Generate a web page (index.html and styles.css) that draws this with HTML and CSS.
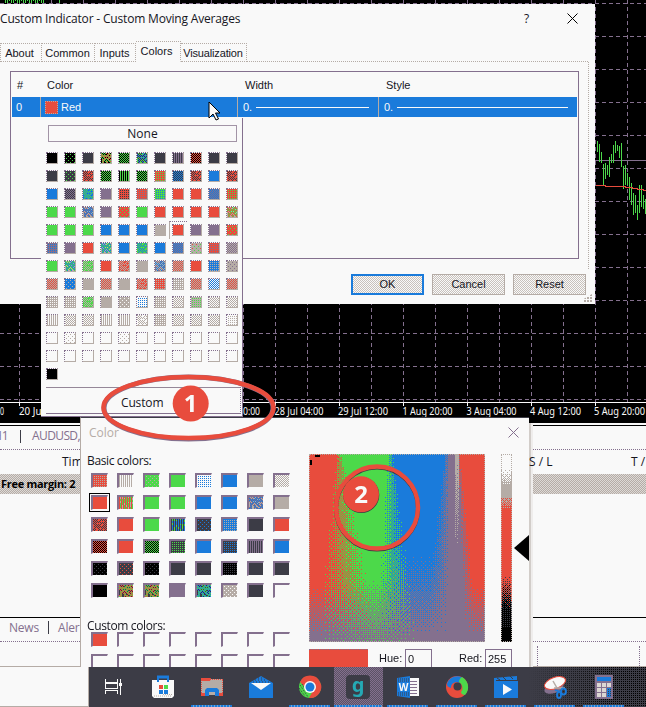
FILE: index.html
```html
<!DOCTYPE html>
<html lang="en">
<head>
<meta charset="utf-8">
<title>Custom Indicator - Custom Moving Averages</title>
<link rel="stylesheet" href="styles.css">
</head>
<body>
<main class="desktop">
  <svg class="chart" id="chart" width="646" height="425" viewBox="0 0 646 425" shape-rendering="crispEdges"></svg>

  <section class="terminal">
    <div class="symbol-tabs"><span class="tab-h1">H1</span><i></i><span class="tab-symbol">AUDUSD,</span></div>
    <div class="trade-head"><span>Tim</span><span>S / L</span><span>T /</span></div>
    <div class="margin-row">Free margin: 2</div>
    <div class="trade-space"></div>
    <div class="news-tabs"><span>News</span><i></i><span>Aler</span></div>
    <div class="status"><i></i></div>
  </section>

  <section class="dialog">
    <header class="title-bar"><h1>Custom Indicator - Custom Moving Averages</h1><span class="help">?</span>
      <svg width="11" height="11" viewBox="0 0 11 11"><path d="M.5.5l10 10M10.5.5l-10 10" stroke="#000" fill="none"/></svg></header>
    <nav class="tabs"><span class="about">About</span><span class="common">Common</span><span class="inputs">Inputs</span><span class="colors active">Colors</span><span class="visual">Visualization</span><b></b></nav>
    <div class="tab-page">
      <div class="table">
        <div class="row head"><span>#</span><span>Color</span><span>Width</span><span>Style</span></div>
        <div class="row selected"><span>0</span><span><i class="chip"></i>Red</span><span>0.<hr></span><span>0.<hr></span></div>
      </div>
    </div>
    <footer class="actions"><button class="primary">OK</button><button>Cancel</button><button>Reset</button></footer>
    <i class="grip"></i>
  </section>

  <section class="picker">
    <header><span>Color</span><svg width="11" height="11" viewBox="0 0 11 11"><path d="M.5.5l10 10M10.5.5l-10 10" stroke="#84708e" fill="none"/></svg></header>
    <div class="picker-body">
      <div class="left">
        <h2>Basic colors:</h2>
        <div class="wells" id="basic"></div>
        <h2 class="second">Custom colors:</h2>
        <div class="wells" id="custom"></div>
      </div>
      <div class="right">
        <div class="mixers">
          <canvas id="spectrum" width="176" height="188"></canvas>
          <canvas id="lum" width="11" height="188"></canvas>
          <i class="arrow"></i>
        </div>
        <div class="values"><i class="preview"></i><label>Hue:</label><b>0</b><label class="red">Red:</label><b>255</b></div>
      </div>
    </div>
  </section>
  <i class="picker-shadow"></i>

  <section class="popup">
    <div class="none">None</div>
    <div class="swatches" id="swatches"></div>
    <div class="custom-button">Custom</div>
  </section>

  <svg class="cursor" width="14" height="21" viewBox="0 0 14 21"><path d="M1 1v16l4-4 3 6 2.500-1-3-6H12z" fill="#f9f9f9" stroke="#000"/></svg>

  <svg class="marks" width="646" height="707" viewBox="0 0 646 707">
    <ellipse cx="188.500" cy="408" rx="84.500" ry="31" fill="none" stroke="#84708e" stroke-width="5"/>
    <ellipse cx="188.500" cy="407.500" rx="85" ry="30.500" fill="none" stroke="#e84c3d" stroke-width="4.500"/>
    <circle cx="190.700" cy="403.500" r="18" fill="#e84c3d"/>
    <text x="190.500" y="412" font-size="24">1</text>
    <circle cx="377" cy="508.500" r="41" fill="none" stroke="#3c3c46" stroke-width="4"/>
    <circle cx="377" cy="507.500" r="41" fill="none" stroke="#e84c3d" stroke-width="4.500"/>
    <circle cx="361.300" cy="495" r="18" fill="#3c3c46"/>
    <circle cx="361" cy="494.300" r="18" fill="#e84c3d"/>
    <text x="361" y="503" font-size="24">2</text>
  </svg>

  <div class="start-corner"></div>
  <nav class="taskbar">
    <span><svg width="24" height="24" viewBox="0 0 24 24" shape-rendering="crispEdges"><path d="M3.500 4v3.500h12V4M3.500 19v-3.500h12V19M3.500 8.500h12v5h-12z" fill="none" stroke="#f9f9f9"/><path d="M18.500 4v16" stroke="#f9f9f9"/><path d="M17 8h3v3h-3z" fill="#f9f9f9"/></svg></span>
    <span><svg width="24" height="24" viewBox="0 0 24 24"><path d="M1 5h22v16l-2 2H3l-2-2z" fill="#f9f9f9"/><path d="M6 2h12" stroke="#1a7bdb" stroke-width="3"/><path d="M7 2v5M17 2v5" stroke="#1a7bdb" stroke-width="2"/><path d="M8 10h4v4H8z" fill="#e84c3d"/><path d="M13 10h4v4h-4z" fill="#4cd94a"/><path d="M8 15h4v4H8zM13 15h4v4h-4z" fill="#1a7bdb"/><path d="M3 21h18M12 19.500h10" stroke="#b5aca6" stroke-dasharray="1 1"/></svg></span>
    <span class="open"><svg width="24" height="24" viewBox="0 0 24 24"><path d="M1 4h22v16H1z" fill="#b5aca6"/><path d="M1 3h10l-1 3H1zM1 18h4v3H1zM19 18h4v3h-4z" fill="#e84c3d"/><path d="M1.500 7v11M22.500 5v13M10 4.500h13M5 16.500h14" stroke="#e84c3d" stroke-dasharray="1 1"/><path d="M5 21v-6l2-2h10l2 2v6h-4v-4H9v4z" fill="#1a7bdb"/></svg></span>
    <span><svg width="24" height="24" viewBox="0 0 24 24"><path d="M0 8L12 1l12 7v15H0z" fill="#1a7bdb"/><path d="M4 7h16M6 5h12M9 3h6" stroke="#3c3c46" stroke-dasharray="1 2"/><path d="M2 8h20l-10 7z" fill="#f9f9f9"/></svg></span>
    <span class="open"><svg width="24" height="24" viewBox="0 0 24 24"><circle cx="12" cy="12" r="11" fill="#4cd94a"/><path d="M2 7A11 11 0 0 1 22 7H12l-5 5z" fill="#e84c3d"/><path d="M22 7a11 11 0 0 1-11 16l6-11-5-5z" fill="#e84c3d"/><path d="M2 10l8 12M1 13l6 8M4 9l3 5" stroke="#3c3c46" stroke-dasharray="1 1"/><circle cx="12" cy="12" r="6" fill="#f9f9f9"/><circle cx="12" cy="12" r="4.500" fill="#1a7bdb"/></svg></span>
    <span class="open current"><em>g</em></span>
    <span class="open"><svg width="24" height="24" viewBox="0 0 24 24"><path d="M13 3h10v18H13z" fill="#f9f9f9"/><path d="M14 6.500h7M14 9.500h7M14 12.500h7M14 15.500h7M14 18.500h7" stroke="#84708e"/><path d="M1 3l13-2v22L1 21z" fill="#1a7bdb"/><path d="M2 4h11M2 6h11M2 18h11M2 20h11" stroke="#3c3c46" stroke-dasharray="1 1"/><text x="7.500" y="16" class="word-letter">W</text></svg></span>
    <span class="open"><svg width="24" height="24" viewBox="0 0 24 24"><circle cx="12" cy="12" r="11" fill="#e84c3d"/><path d="M2 9C4 2 12-1 18 3c-3 2-3 4-3 5-5-2-9 0-9 5-3-1-4-2-4-4z" fill="#1a7bdb"/><path d="M17 2c7 4 8 13 3 18-2 0-4-1-4-3 3-4 1-8-2-10 0-2 1-4 3-5z" fill="#4cd94a"/><circle cx="12.500" cy="11.500" r="4" fill="#3c3c46"/></svg></span>
    <span class="open"><svg width="24" height="24" viewBox="0 0 24 24"><path d="M0 3l23-2v4l1 1v17H0z" fill="#1a7bdb"/><path d="M2 5.500h22M3 3l3 2M9 2l3 3M16 1l3 3" stroke="#3c3c46"/><path d="M9 9v11l9-5.500z" fill="#f9f9f9"/></svg></span>
    <span class="open"><svg width="24" height="24" viewBox="0 0 24 24"><ellipse cx="11" cy="13" rx="10" ry="5" fill="#84708e" transform="rotate(-20 11 13)"/><ellipse cx="12" cy="8" rx="11" ry="5.500" fill="#f9f9f9" stroke="#e84c3d" transform="rotate(-20 12 8)"/><path d="M10 6l4 7M11 13h11" stroke="#b5aca6" stroke-width="1.500"/><g fill="none" stroke="#1a7bdb" stroke-width="1.800"><ellipse cx="16" cy="20" rx="2" ry="3"/><ellipse cx="20.500" cy="16.500" rx="2.500" ry="3"/><path d="M12 15l6 2"/></g></svg></span>
    <span class="open"><svg width="24" height="24" viewBox="0 0 24 24" shape-rendering="crispEdges"><path d="M3 0h18v24H3z" fill="#84708e"/><path d="M5 2h14v4H5z" fill="#1a7bdb"/><path d="M5 8h4v4H5zM10 8h4v4h-4zM15 8h4v4h-4zM5 13h4v4H5zM10 13h4v4h-4zM5 18h4v4H5zM10 18h4v4h-4z" fill="#dcd7d3"/><path d="M15 13h4v9h-4z" fill="#1a7bdb"/><path d="M16 14v8M18 14v8" stroke="#3c3c46" stroke-dasharray="1 1"/></svg></span>
  </nav>
</main>
<script src="script.js"></script>
</body>
</html>
```
FILE: styles.css
```css
:root {
  --k: #000000; --n: #3c3c46; --r: #e84c3d; --g: #4cd94a;
  --b: #1a7bdb; --p: #84708e; --t: #b5aca6; --w: #f9f9f9;
}
* { box-sizing: border-box; }
body { margin: 0; background: #000; font: 11px/14px "Liberation Sans", sans-serif; color: #16161e; }
h1, h2 { margin: 0; font-weight: normal; }
i, em { font-style: normal; }
.desktop { position: relative; width: 646px; height: 707px; overflow: hidden; white-space: nowrap; }
.chart { display: block; }
.chart text { font: 10px "Noto Sans", sans-serif; fill: var(--w); }

/* main dialog */
.dialog { position: absolute; left: 0; top: 4px; width: 595px; height: 300px; background: var(--w); }
.title-bar { display: flex; align-items: center; height: 30px; padding: 0 17px 1px 0; }
.title-bar h1 { flex: 1; font: 12px/16px "Open Sans", sans-serif; letter-spacing: -.18px; }
.title-bar .help { width: 6px; margin-right: 37px; font: 12px "Open Sans", sans-serif; }
.tabs { display: flex; align-items: flex-end; height: 28px; }
.tabs span { height: 19px; padding: 2px 1px 0 0; text-align: center; border: 1px dotted var(--t); border-left-width: 0; }
.tabs b { flex: 1; border-top: 1px dotted var(--t); margin-right: 7px; }
.tabs .about { width: 42px; border-left-width: 1px; padding-right: 3px; }
.tabs .common { width: 53px; }
.tabs .inputs { width: 41px; }
.tabs .colors { width: 45px; height: 21px; padding-right: 3px; border-bottom-color: transparent; }
.tabs .visual { width: 66px; letter-spacing: -.15px; }
.tab-page { height: 207px; width: 589px; padding: 9px 9px 0 10px; border-right: 1px dotted var(--t); }
.table { height: 188px; border: 1px solid var(--p); padding: 0 1px; }
.row { display: grid; grid-template-columns: 29px 197px 141px 1fr; }
.row.head { height: 25px; padding-top: 6px; }
.row span { padding-left: 7px; }
.row.head span:nth-child(2) { padding-left: 6px; }
.row span:first-child { padding-left: 5px; }
.row.selected { height: 20px; background: var(--b); color: var(--w); }
.selected span { display: flex; align-items: center; border-right: 1px solid var(--t); padding-left: 5px; }
.row.selected span:first-child { padding-left: 4px; }
.selected span:nth-child(2) { padding-left: 4px; }
.selected span:last-child { border: 0; }
.selected hr { flex: 1; border: 0; border-top: 1px solid var(--w); margin: 0 9px 0 4px; }
.chip { width: 13px; height: 13px; border: 1px dotted var(--t); background: var(--r); margin-right: 3px; }
.actions { display: flex; justify-content: flex-end; gap: 8px; padding-right: 9px; margin-top: 5px; }
.actions button { width: 73px; height: 21px; padding: 0; font: 11px/15px "Liberation Sans", sans-serif; color: #16161e; border: 1px solid var(--t); background: repeating-conic-gradient(#c8c1bc 0 25%, var(--w) 0 50%) 0 0 / 2px 2px; }
.actions .primary { border: 2px solid var(--b); }
.grip { position: absolute; right: 3px; bottom: 2px; width: 8px; height: 8px; background: conic-gradient(from 270deg at 2px 2px, var(--t) 90deg, transparent 0) 0 0 / 3px 3px; clip-path: polygon(100% 0, 100% 100%, 0 100%, 0 60%); }

/* colour popup */
.popup { position: absolute; left: 41px; top: 118px; width: 202px; height: 299px; padding: 7px 0 0 5px; background: var(--w); border-right: 1px solid var(--p); border-bottom: 1px solid var(--p); }
.none { width: 189px; height: 17px; margin-left: 2px; border: 1px solid #a294a6; text-align: center; font: 12px/15px "Open Sans", sans-serif; }
.swatches { display: grid; grid-template-columns: repeat(11, 12px); grid-auto-rows: 12px; gap: 6px; margin-top: 10px; }
.swatches i { position: relative; border: 1px solid var(--t); border-top: 1px dotted var(--p); border-left: 1px dotted var(--p); }
.swatches canvas, .wells canvas { display: block; width: 100%; height: 100%; image-rendering: pixelated; }
.swatches .picked::before { content: ""; position: absolute; left: -4px; top: -4px; width: 17px; height: 17px; border-top: 1px dotted var(--p); border-left: 1px solid var(--t); }
.custom-button { width: 195px; height: 27px; margin-top: 7px; border-top: 1px solid #958798; border-bottom: 1px solid var(--p); border-right: 1px dotted var(--p); padding: 7px 0 0 75px; font: 12px/15px "Open Sans", sans-serif; letter-spacing: -.15px; }

/* terminal */
.terminal { position: absolute; left: 0; top: 423px; width: 646px; height: 284px; background: var(--w); font: 11px/14px "Open Sans", sans-serif; }
.symbol-tabs { display: flex; align-items: center; height: 27px; border-bottom: 1px dotted var(--p); color: var(--p); background: linear-gradient(#000, #000) 0 2px / 100% 1px no-repeat; font-size: 12px; }
.symbol-tabs i { width: 1px; height: 13px; background: var(--n); margin: 0 11px 0 12px; }
.tab-h1 { margin-left: -7px; width: 15px; }
.tab-symbol { letter-spacing: -.6px; }
.trade-head { display: grid; grid-template-columns: 467px 102px 1fr; height: 24px; padding: 5px 0 0 62px; font-size: 12px; }
.trade-head span { position: relative; z-index: 1; }
.margin-row { height: 20px; padding: 3px 1px; font-weight: bold; letter-spacing: -.3px; color: #000; background: repeating-conic-gradient(var(--t) 0 25%, #ddd9d6 0 50%) 0 0 / 2px 2px; }
.trade-space { height: 124px; border-bottom: 1px solid #000; }
.news-tabs { display: flex; align-items: center; height: 24px; padding: 0 0 4px 9px; border-bottom: 1px dotted var(--p); color: var(--p); font-size: 12px; }
.news-tabs i { width: 1px; height: 13px; background: var(--n); margin: 0 9px 0 9px; }
.news-tabs span { letter-spacing: -.2px; }
.status { height: 25px; border-bottom: 1px solid var(--t); padding: 4px 6px 0 537px; }
.status i { display: block; height: 20px; border: 1px dotted var(--p); border-width: 0 1px; }
.start-corner { position: absolute; left: 0; top: 667px; width: 89px; height: 40px; background: var(--w); border-right: 1px solid var(--t); border-bottom: 1px solid var(--t); }

/* colour picker dialog */
.picker { position: absolute; z-index: 1; left: 80px; top: 417px; width: 449px; height: 250px; background: var(--w); border-left: 1px solid var(--t); border-top: 1px solid var(--n); overflow: hidden; }
.picker header { display: flex; justify-content: space-between; align-items: center; height: 28px; padding: 0 10px 0 8px; font: 12px "Open Sans", sans-serif; color: var(--t); }
.picker-body { display: flex; }
.left { width: 228px; padding: 8px 0 0 6px; }
.left h2 { height: 19px; font: 12px/14px "Open Sans", sans-serif; letter-spacing: -.36px; }
.left .second { height: 13px; margin-top: 21px; }
.wells { display: grid; grid-template-columns: repeat(8, 17px); grid-auto-rows: 15px; gap: 7px 9px; margin-left: 4px; }
.wells i { border-top: 2px solid var(--p); border-left: 2px solid var(--p); border-right: 1px solid var(--w); border-bottom: 1px solid var(--w); }
.wells .picked { outline: 1px solid #000; outline-offset: 1px; }
.right { padding-top: 8px; }
.mixers { display: flex; height: 188px; }
.mixers canvas { display: block; outline: 1px dotted var(--t); outline-offset: -1px; }
.mixers #lum { margin-left: 16px; }
.arrow { width: 15px; height: 26px; margin: 81px 0 0 2px; background: #000; clip-path: polygon(0 50%, 100% 0, 100% 100%); }
.values { display: flex; height: 25px; margin-top: 7px; line-height: 18px; }
.preview { width: 59px; background: var(--r); border-top: 1px dotted var(--p); margin-right: 11px; }
.values label { width: 26px; }
.values .red { margin-left: 27px; }
.values b { width: 27px; border: 1px solid var(--p); padding-left: 2px; font-weight: normal; }
.picker-shadow { position: absolute; left: 528px; top: 423px; width: 5px; height: 244px; background: linear-gradient(90deg, var(--t) 1px, #d2cdc9 1px 3px, #efedec 3px); }

.popup, .marks, .cursor, .start-corner, .taskbar { z-index: 2; }
.cursor { position: absolute; left: 208px; top: 101px; }
.marks { position: absolute; left: 0; top: 0; }
.marks text { font-family: "Open Sans", sans-serif; font-weight: bold; fill: var(--w); text-anchor: middle; }

/* taskbar */
.taskbar { position: absolute; left: 89px; top: 667px; width: 557px; height: 40px; display: flex; background: linear-gradient(90deg, var(--n) 440px, transparent 520px), conic-gradient(from 270deg at 1px 1px, #000 90deg, var(--n) 0) 0 0 / 2px 2px; }
.taskbar span { width: 49px; height: 40px; display: flex; justify-content: center; padding-top: 8px; }
.taskbar .open { background: repeating-linear-gradient(90deg, var(--b) 0 2px, #73a6d2 2px 3px) 4px 38px / 41px 2px no-repeat; }
.taskbar .current { background: repeating-linear-gradient(90deg, var(--b) 0 2px, #73a6d2 2px 3px) 0 38px / 48px 2px no-repeat, repeating-conic-gradient(var(--p) 0 25%, #5b5265 0 50%) 0 0 / 2px 2px; padding-right: 1px; }
.current em { width: 24px; height: 24px; border-radius: 4px; background: var(--n); color: #25a9b4; text-align: center; font: bold 20px/19px "Noto Sans", sans-serif; }
.word-letter { font: bold 10px "Open Sans", sans-serif; fill: var(--w); text-anchor: middle; }
```
FILE: script.js
```js
const hex = { k: '#000000', n: '#3c3c46', r: '#e84c3d', g: '#4cd94a', b: '#1a7bdb', p: '#84708e', t: '#b5aca6', w: '#f9f9f9' };
const noise = (x, y) => ((x * 7 + y * 13 + x * y * 5 + y * y * 3) % 11) / 11;
const textures = {
  c: (x, y) => (x + y) & 1,
  d: (x, y) => x & y & 1,
  s: (x, y) => (y & 1) && (x + y) % 4 === 2,
  v: x => x & 1,
  m: (x, y) => (x + y) & 1 || noise(x, y) > .8
};

// Swatch code: base colour, overlay colours, texture; "*" marks the chosen one.
function fill(id, codes, w, h) {
  const host = document.getElementById(id);
  codes.trim().split(/\s+/).forEach(code => {
    const cell = document.createElement('i'), c = document.createElement('canvas');
    if (code.endsWith('*')) { cell.classList.add('picked'); code = code.slice(0, -1); }
    c.width = w; c.height = h;
    const g = c.getContext('2d');
    g.fillStyle = hex[code[0]];
    g.fillRect(0, 0, w, h);
    if (code.length > 2) {
      const test = textures[code[code.length - 1]], overs = code.slice(1, -1);
      for (let y = 0; y < h; y++) for (let x = 0; x < w; x++) if (test(x, y)) {
        g.fillStyle = hex[overs[Math.floor(noise(x, y) * overs.length)]];
        g.fillRect(x, y, 1, 1);
      }
    }
    cell.append(c);
    host.append(cell);
  });
}
fill('swatches', `
  k kgs n grkm kgc nbgm n npv krc n n
  n ngs nrm kgc kgv kgc rgd nbc nrm b nrm
  b npc gbm p rnd rpd gbd r r bpc rgd
  g g pbtm p rgs g r r r r rgtm
  g g g b b b t r* p p rgs
  pbd p r bgtm b bgm b pbc tgrs rpd tpc
  g gbtm tgm r trm t tbpm trc r btd tps
  trc bts t trc t trm rtd twd trc wbc trc
  twd twd tgm t tws wbd twd twc tgd twc twc
  twv twc twc twv twv twm twd twc twc twc wtd
  w wts w w wts w w w w w w
  w w w w w w w w w w w
  k`, 10, 10);
fill('basic', `
  rtd twv gts g wbd b t wtc
  r* rgtv g g b b pbtm t
  nrm r g nbgv nbs btd n r
  krc r kgc ngd b nbd npv b
  kns nrs kns n n knd n n
  k rgnm grnm p bgnm tws n w`, 14, 12);
fill('custom', 'r w w w w w w w w w w w w w w w', 14, 12);

const chart = document.getElementById('chart');
let art = '<rect width="646" height="425" fill="#000"/><g stroke="#84708e" stroke-dasharray="4 3">';
for (let x = 19.5; x < 646; x += 32) art += `<path d="M${x} 0V402"/>`;
for (let y = 3.5; y < 402; y += 33) art += `<path d="M0 ${y}H646"/>`;
art += '</g><path d="M595 160.500H646" stroke="#84708e"/><g stroke="#4cd94a">';
[[52,93,126],[58,102,155],[64,126,158],[70,162,228],[76,158,208],[82,165,196],[88,140,200],[94,132,158],[100,105,158],[106,93,128],[112,106,122],[118,108,144],[124,98,172],[130,168,238],[136,165,225],[142,190,225],[148,202,270],[154,218,285],[160,250,316],[166,255,310],[172,285,330],[178,225,308],[184,225,290],[190,255,296],[196,266,312]]
  .forEach(([x, a, b]) => { art += `<path d="M${580.5 + Math.floor(x / 3)} ${110 + a / 3}V${110 + b / 3}"/>`; });
for (let x = 5; x < 44; x += 2) art += `<path d="M${x + .5} 0v${x % 3 ? 3 : 1}"/>`;
art += '<path d="M59.500 0v3"/></g><path d="M596 185.500h9v1h20v1h7v1h5v1h6v1h3" fill="none" stroke="#e84c3d"/>';
art += '<path d="M0 402.500H646" stroke="#f9f9f9"/>';
for (let x = 19.5; x < 646; x += 64) art += `<path d="M${x} 402v4" stroke="#f9f9f9"/>`;
[[0,4,'0'],[19,25,'20 Jul'],[243,17,'0:00'],[274.5,49,'28 Jul 04:00'],[338,50,'29 Jul 12:00'],[402.5,50,'1 Aug 20:00'],[466.5,50,'3 Aug 04:00'],[530,51,'4 Aug 12:00'],[594,51,'5 Aug 20:00']]
  .forEach(([x, w, s]) => { art += `<text x="${x}" y="415" textLength="${w}" lengthAdjust="spacingAndGlyphs">${s}</text>`; });
chart.innerHTML = art;

// Ordered dithering between weighted palette colours.
const clamp = v => Math.max(0, Math.min(1, v));
function bayer(x, y) {
  let v = 0;
  for (let i = 0; i < 3; i++) v = v * 4 + ((((x ^ y) >> i) & 1) * 2 + ((y >> i) & 1));
  return (v + .5) / 64;
}
function paint(id, weights) {
  const c = document.getElementById(id), g = c.getContext('2d');
  for (let y = 0; y < c.height; y++) for (let x = 0; x < c.width; x++) {
    let t = bayer(x, y), pick = 'p';
    for (const [k, w] of weights(x, y / c.height)) { pick = k; if (t < w) break; t -= w; }
    g.fillStyle = hex[pick];
    g.fillRect(x, y, 1, 1);
  }
}
paint('spectrum', (x, v) => {
  if (x > 145 && x < 150 && v < .5) return [['t', clamp(1.1 - v * 2.2)], ['p', 1]];
  const rg = clamp((x - (27 - 20 * v)) / (6 + 58 * v));
  const gb = clamp((x - (78 - 12 * v)) / (6 + 36 * v));
  const bp = clamp((x - (135 - 22 * v)) / (4 + 24 * v));
  const pr = clamp((x - (148 + 8 * v)) / (3 + 10 * v));
  const r = (1 - rg) + pr, g = rg * (1 - gb), b = gb * (1 - bp);
  const keepR = clamp((.96 - v) / .26), keepG = clamp((1.06 - v) / .4), keepB = clamp((.96 - v) / .42);
  return [['g', g * keepG], ['r', r * keepR], ['b', b * keepB], ['p', 1]];
});
paint('lum', (x, v) => v < .08 ? [['w', 1]]
  : v < .16 ? [['t', (v - .08) * 10], ['w', 1]]
  : v < .225 ? [['t', 1]]
  : v < .29 ? [['r', (v - .2) * 9], ['t', 1]]
  : v < .65 ? [['r', 1]]
  : v < .82 ? [['r', .9 - (v - .65) * 5.5], ['n', .3], ['k', 1]]
  : v < .92 ? [['n', .25], ['k', 1]] : [['k', 1]]);
const marks = document.getElementById('spectrum').getContext('2d');
marks.fillStyle = '#000';
marks.fillRect(6, 1, 5, 2);
marks.fillRect(1, 6, 2, 5);
```
